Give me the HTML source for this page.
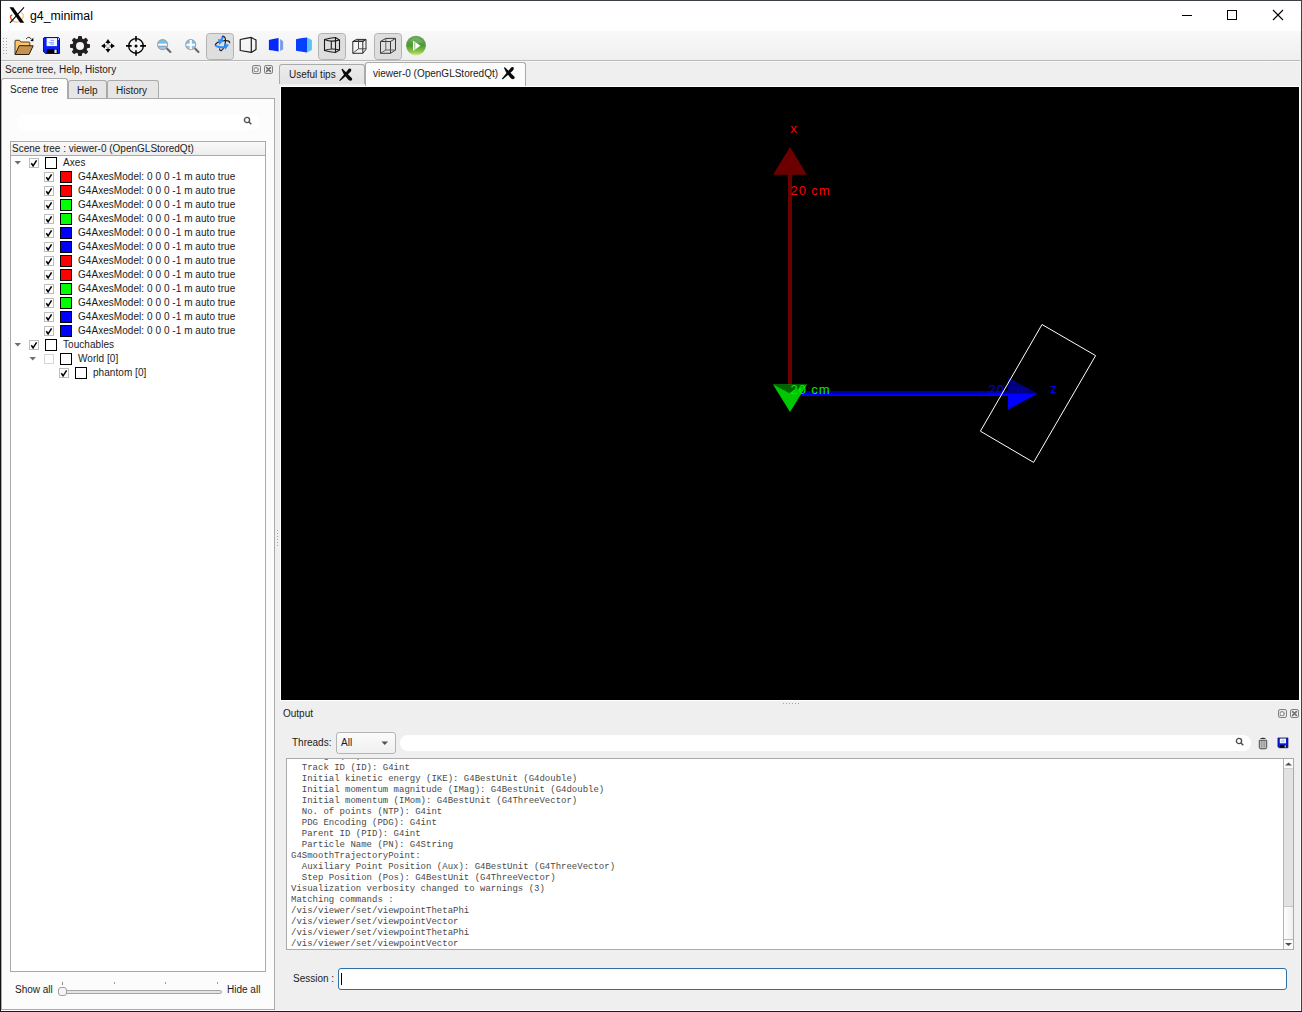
<!DOCTYPE html>
<html><head><meta charset="utf-8">
<style>
*{margin:0;padding:0;box-sizing:border-box}
html,body{width:1302px;height:1012px;overflow:hidden;background:#1c1c1c}
body{position:relative;font-family:"Liberation Sans",sans-serif;font-size:10px;color:#1b1b1b}
.a{position:absolute}
.t{position:absolute;white-space:pre;line-height:1}
#win{left:0;top:0;width:1302px;height:1011px;background:#efefef;border-top:1px solid #3b4046;border-left:1px solid #151515;border-right:1px solid #3c4248}
#title{left:1px;top:1px;width:1300px;height:30px;background:#fff}
#tb{left:1px;top:31px;width:1299px;height:29px;background:linear-gradient(#f9f9f9,#efefef)}
#tbline{left:1px;top:60px;width:1299px;height:1px;background:#bababa}
#tbline2{left:1px;top:61px;width:1299px;height:1px;background:#f6f6f6}
.pane{border:1px solid #aaaaaa;background:#fcfcfc}
.tab{border:1px solid #aaaaaa;border-bottom:none;border-radius:3px 3px 0 0;background:#e6e6e6}
.tabon{border:1px solid #aaaaaa;border-bottom:none;border-radius:3px 3px 0 0;background:#fcfcfc}
.row{position:absolute;height:14px;white-space:pre}
.cb{position:absolute;width:10px;height:10px;border:1px solid #bdbdbd;background:#fff}
.col{position:absolute;width:12px;height:12px;border:1px solid #101010}
.mono{font-family:"Liberation Mono",monospace;font-size:9px;color:#4a4a4a}
</style></head><body>

<div id="win" class="a"></div>
<div id="title" class="a"></div>
<div class="t" style="left:30px;top:10px;font-size:12.3px;color:#000">g4_minimal</div>
<div id="tb" class="a"></div>
<div id="tbline" class="a"></div>
<div id="tbline2" class="a"></div>

<!-- left dock -->
<div class="t" style="left:5px;top:65px">Scene tree, Help, History</div>
<div class="a pane" style="left:1px;top:98px;width:274px;height:912px"></div>
<div class="a tab" style="left:68px;top:80px;width:39px;height:18px"></div>
<div class="a tab" style="left:107px;top:80px;width:52px;height:18px"></div>
<div class="a tabon" style="left:1px;top:78px;width:67px;height:21px"></div>
<div class="t" style="left:10px;top:85px">Scene tree</div>
<div class="t" style="left:77px;top:86px">Help</div>
<div class="t" style="left:116px;top:86px">History</div>

<div class="a" style="left:10px;top:141px;width:256px;height:831px;border:1px solid #aaaaaa;background:#fff"></div>
<div class="a" style="left:11px;top:142px;width:254px;height:14px;background:linear-gradient(#fafafa,#ececec);border-bottom:1px solid #aaaaaa"></div>
<div class="t" style="left:12px;top:144px">Scene tree : viewer-0 (OpenGLStoredQt)</div>

<!-- title bar icons -->
<svg class="a" style="left:8px;top:6px" width="18" height="18" viewBox="0 0 18 18">
<path d="M4.2 9.5 C1.5 8 2 14 5.5 15.3" fill="none" stroke="#e8501a" stroke-width="1.4"/>
<path d="M13.2 6.5 C16.8 8.5 15.5 14 10.5 15.8 C8.5 16.3 6.5 16 5.5 15.3" fill="none" stroke="#f3b050" stroke-width="1.1" opacity="0.85"/>
<path d="M1.5 1.3 L5.3 1.3 L16.2 16.7 L12.2 16.7 Z" fill="#000"/>
<path d="M16 1.3 L2 16.8" stroke="#000" stroke-width="1.1"/>
</svg>
<div class="a" style="left:1182px;top:15px;width:10px;height:1px;background:#000"></div>
<div class="a" style="left:1227px;top:10px;width:10px;height:10px;border:1px solid #000"></div>
<svg class="a" style="left:1272px;top:9px" width="12" height="12" viewBox="0 0 12 12"><path d="M1 1 L11 11 M11 1 L1 11" stroke="#000" stroke-width="1.1"/></svg>

<!-- toolbar -->
<svg class="a" style="left:0;top:31px" width="440" height="29" viewBox="0 31 440 29">
<g fill="#a6a6a6">
<rect x="3" y="38" width="1" height="1"/><rect x="6" y="38" width="1" height="1"/>
<rect x="3" y="41" width="1" height="1"/><rect x="6" y="41" width="1" height="1"/>
<rect x="3" y="44" width="1" height="1"/><rect x="6" y="44" width="1" height="1"/>
<rect x="3" y="47" width="1" height="1"/><rect x="6" y="47" width="1" height="1"/>
<rect x="3" y="50" width="1" height="1"/><rect x="6" y="50" width="1" height="1"/>
<rect x="3" y="53" width="1" height="1"/><rect x="6" y="53" width="1" height="1"/>
</g>
<!-- folder -->
<path d="M15 54.5 L15 41 Q15 40.3 15.8 40.3 L19.5 40.3 L20.8 42 L29 42 Q29.8 42 29.8 42.8 L29.8 45.5 L15 54.5 Z" fill="#fcc668" stroke="#3a2a12" stroke-width="0.9"/>
<path d="M15.2 54.5 L19.2 45.6 L33.2 45.8 L29 54.5 Z" fill="#c49352" stroke="#2e200e" stroke-width="1"/>
<path d="M26 39 Q28.8 35.4 31.6 39.4" fill="none" stroke="#222" stroke-width="0.9"/>
<path d="M30.3 40.9 L33.3 37.8 L33.4 41.3 Z" fill="#000"/>
<!-- floppy -->
<path d="M44.2 37.5 L58.5 37.5 L59.5 38.5 L59.5 53.5 L45.5 53.5 L43.5 51.8 L43.5 38.2 Z" fill="#0a22f4" stroke="#0c0c38" stroke-width="0.9"/>
<rect x="46.6" y="38.1" width="10.4" height="8" fill="#f6f8ff"/>
<path d="M50.5 40.4 H54 M48.8 42.6 H54 M50.2 44.2 H54" stroke="#6f8cf8" stroke-width="0.8"/>
<rect x="46.9" y="49" width="10.9" height="4.3" fill="#000"/>
<rect x="54.4" y="49.6" width="2.3" height="3.4" fill="#e8e8e8"/>
<rect x="58" y="38.2" width="0.8" height="1.8" fill="#fff"/>
<!-- gear -->
<g transform="translate(80 46)" fill="#241f20">
<circle r="7.7"/>
<rect x="-2" y="-10" width="4" height="20" rx="1"/>
<rect x="-2" y="-10" width="4" height="20" rx="1" transform="rotate(45)"/>
<rect x="-2" y="-10" width="4" height="20" rx="1" transform="rotate(90)"/>
<rect x="-2" y="-10" width="4" height="20" rx="1" transform="rotate(135)"/>
<circle r="4" fill="#f4f4f4"/>
</g>
<!-- move -->
<g fill="#000">
<path d="M108 39 L110.6 42.9 L105.4 42.9 Z"/><path d="M108 52.8 L110.6 48.9 L105.4 48.9 Z"/>
<path d="M101.1 45.9 L105 43.3 L105 48.5 Z"/><path d="M114.9 45.9 L111 43.3 L111 48.5 Z"/>
<rect x="107.3" y="43" width="1.4" height="1.2" opacity="0.75"/><rect x="107.3" y="47.6" width="1.4" height="1.2" opacity="0.75"/>
<rect x="105" y="45.2" width="1.2" height="1.4" opacity="0.75"/><rect x="109.8" y="45.2" width="1.2" height="1.4" opacity="0.75"/>
<rect x="106.3" y="44.3" width="1" height="1" opacity="0.35"/><rect x="108.7" y="44.3" width="1" height="1" opacity="0.35"/>
<rect x="106.3" y="46.7" width="1" height="1" opacity="0.35"/><rect x="108.7" y="46.7" width="1" height="1" opacity="0.35"/>
</g>
<!-- crosshair -->
<g stroke="#000">
<circle cx="136" cy="45.9" r="7.3" fill="none" stroke-width="1.35"/>
<path d="M136 36 V41.6 M136 50.2 V55.8 M126 45.9 H131.7 M140.2 45.9 H146" stroke-width="1.6"/>
</g>
<circle cx="136" cy="45.9" r="1.5" fill="#000"/>
<!-- zoom out -->
<defs><linearGradient id="lens" x1="0" y1="0" x2="0" y2="1"><stop offset="0" stop-color="#62c8f6"/><stop offset="0.55" stop-color="#62c8f6"/><stop offset="0.7" stop-color="#9ab8ee"/><stop offset="1" stop-color="#b8c8f0"/></linearGradient></defs>
<g>
<path d="M166.9 48.4 L170.4 52" stroke="#686868" stroke-width="2.1" stroke-linecap="round"/>
<circle cx="162.6" cy="44.6" r="5" fill="url(#lens)" stroke="#a4a4a4" stroke-width="1.2"/>
<rect x="158.3" y="43.7" width="8.6" height="2.1" fill="#fff"/>
<rect x="158.6" y="45.8" width="8" height="0.6" fill="#707070" opacity="0.6"/>
</g>
<!-- zoom in -->
<g>
<path d="M195 48.4 L198.5 52" stroke="#686868" stroke-width="2.1" stroke-linecap="round"/>
<circle cx="190.7" cy="44.6" r="5" fill="url(#lens)" stroke="#a4a4a4" stroke-width="1.2"/>
<rect x="186.4" y="43.7" width="8.6" height="2.1" fill="#fff"/>
<rect x="189.7" y="40" width="2.1" height="9.2" fill="#fff"/>
</g>
<!-- pressed buttons -->
<rect x="206.5" y="33.5" width="27" height="26" rx="3" fill="#dedede" stroke="#b2b2b2"/>
<rect x="318.5" y="33.5" width="27" height="26" rx="3" fill="#dedede" stroke="#b2b2b2"/>
<rect x="374.5" y="33.5" width="27" height="26" rx="3" fill="#dedede" stroke="#b2b2b2"/>
<!-- rotate -->
<g fill="none" stroke-linecap="round">
<path d="M215.3 45 Q216.5 41.6 224 40.6 Q229.6 40.3 229.6 42.6" stroke="#1c1c1c" stroke-width="1.3"/>
<path d="M223 36.4 Q225.9 36.2 225.4 42 Q224.9 48 221.4 50.6 Q219.6 51 219.7 48.9" stroke="#222" stroke-width="1.2"/>
<path d="M223 36.6 L221 40.6" stroke="#2a90ff" stroke-width="2.2"/>
<path d="M216.2 46.1 Q219.5 47.7 224.8 47.2" stroke="#2a8cff" stroke-width="1.9"/>
</g>
<path d="M217.9 39.1 L223.9 40.3 L219.3 45.1 Z" fill="#2a90ff"/>
<path d="M224 44.1 L229 44.5 L225.4 49.8 Z" fill="#2a90ff"/>
<circle cx="222.9" cy="36.5" r="0.8" fill="#00107a"/>
<!-- perspective outline box -->
<path d="M240.2 39.5 Q246 38.2 251.3 37.4 L256 40.1 L256 49.6 L251.3 52.4 Q246 51.5 240.2 50.5 Z M251.3 37.4 V52.4" fill="none" stroke="#1e1e1e" stroke-width="1.2" stroke-linejoin="round"/>
<!-- half blue -->
<path d="M268.9 40 L273 39 L278.6 38.1 L278.6 51.6 L273 50.6 L268.9 49.9 Z" fill="#0328fe"/>
<path d="M280.1 39 L283.1 41.3 L283.1 49.5 L280.1 51 Z" fill="#7d9be0"/>
<!-- solid blue -->
<path d="M296 39.2 L300.5 38.2 L307 37.5 L307 52.6 L300.5 51.6 L296 50.8 Z" fill="#0540ff"/>
<path d="M307 37.5 L311.9 40 L311.9 49.9 L307 52.6 Z" fill="#5cc4ee"/>
<!-- wireframe persp -->
<g fill="none" stroke="#1a1a1a" stroke-width="1.1">
<path d="M324.5 39.6 Q330 37.8 335.5 37.5 L339.5 40 L339.5 50 L335.5 52.5 Q330 52.2 324.5 50.5 Z"/>
<path d="M335.5 37.5 V52.5"/>
<path d="M324.5 39.6 Q331 42.5 339.5 40 M324.5 50.5 Q331 47.8 339.5 50 M331.3 41.6 V48.4"/>
</g>
<!-- ortho cube small -->
<g fill="none" stroke="#2c2c2c" stroke-width="1">
<path d="M352.8 41.5 L356.5 39.4 L366 39.4 L362.8 41.5 Z" fill="#9a9a9a"/>
<path d="M352.8 41.5 H362.8 V53.3 H352.8 Z M362.8 41.5 L366 39.4 V49.3 L362.8 53.3"/>
<path d="M358.5 39.6 V48.8 H366 M352.8 53.3 L358.5 48.8" stroke="#3a3a3a" stroke-width="0.9"/>
</g>
<!-- ortho cube in pressed -->
<g fill="none" stroke="#3a3a3a" stroke-width="1">
<path d="M380.5 41.5 L385.8 38.4 H395.5 L390.5 41.5 Z M380.5 41.5 V53.3 H390.5 V41.5 M395.5 38.4 V50 L390.5 53.3"/>
<path d="M385.8 38.4 V50 H395.5 M380.5 53.3 L385.8 50" stroke="#555" stroke-width="0.9"/>
</g>
<!-- green play -->
<defs><linearGradient id="gp" x1="0" y1="0" x2="0" y2="1"><stop offset="0" stop-color="#6aa85e"/><stop offset="0.5" stop-color="#4c9a34"/><stop offset="0.8" stop-color="#8cc448"/><stop offset="1" stop-color="#d6ec90"/></linearGradient></defs>
<circle cx="416" cy="45.6" r="9.9" fill="url(#gp)"/>
<path d="M409 41 Q416 34 423.5 42 Q418 45 409 41Z" fill="#ffffff" opacity="0.12"/>
<rect x="413" y="41.2" width="1.5" height="9.3" fill="#fff"/>
<path d="M415.2 42 L420.4 45.7 L415.2 49.5 Z" fill="#fff"/>
</svg>
<svg class="a" style="left:14px;top:160px" width="8" height="6" viewBox="0 0 8 6"><path d="M0.5 1 L7 1 L3.75 4.5 Z" fill="#6e6e6e"/></svg><div class="a" style="left:29px;top:158px;width:10px;height:10px;border:1px solid #bdbdbd;background:#fff"></div><svg class="a" style="left:29px;top:158px" width="10" height="10" viewBox="0 0 10 10"><path d="M2.3 5.2 L4.1 7.8 L7.6 2.3" fill="none" stroke="#000" stroke-width="1.5"/></svg><div class="a" style="left:45px;top:157px;width:12px;height:12px;border:1px solid #000;background:#fff"></div><div class="t" style="left:63px;top:158px;letter-spacing:0.05px">Axes</div>
<div class="a" style="left:44px;top:172px;width:10px;height:10px;border:1px solid #bdbdbd;background:#fff"></div><svg class="a" style="left:44px;top:172px" width="10" height="10" viewBox="0 0 10 10"><path d="M2.3 5.2 L4.1 7.8 L7.6 2.3" fill="none" stroke="#000" stroke-width="1.5"/></svg><div class="a" style="left:60px;top:171px;width:12px;height:12px;border:1px solid #000;background:#ff0000"></div><div class="t" style="left:78px;top:172px;letter-spacing:0.05px">G4AxesModel: 0 0 0 -1 m auto true</div>
<div class="a" style="left:44px;top:186px;width:10px;height:10px;border:1px solid #bdbdbd;background:#fff"></div><svg class="a" style="left:44px;top:186px" width="10" height="10" viewBox="0 0 10 10"><path d="M2.3 5.2 L4.1 7.8 L7.6 2.3" fill="none" stroke="#000" stroke-width="1.5"/></svg><div class="a" style="left:60px;top:185px;width:12px;height:12px;border:1px solid #000;background:#ff0000"></div><div class="t" style="left:78px;top:186px;letter-spacing:0.05px">G4AxesModel: 0 0 0 -1 m auto true</div>
<div class="a" style="left:44px;top:200px;width:10px;height:10px;border:1px solid #bdbdbd;background:#fff"></div><svg class="a" style="left:44px;top:200px" width="10" height="10" viewBox="0 0 10 10"><path d="M2.3 5.2 L4.1 7.8 L7.6 2.3" fill="none" stroke="#000" stroke-width="1.5"/></svg><div class="a" style="left:60px;top:199px;width:12px;height:12px;border:1px solid #000;background:#00ff00"></div><div class="t" style="left:78px;top:200px;letter-spacing:0.05px">G4AxesModel: 0 0 0 -1 m auto true</div>
<div class="a" style="left:44px;top:214px;width:10px;height:10px;border:1px solid #bdbdbd;background:#fff"></div><svg class="a" style="left:44px;top:214px" width="10" height="10" viewBox="0 0 10 10"><path d="M2.3 5.2 L4.1 7.8 L7.6 2.3" fill="none" stroke="#000" stroke-width="1.5"/></svg><div class="a" style="left:60px;top:213px;width:12px;height:12px;border:1px solid #000;background:#00ff00"></div><div class="t" style="left:78px;top:214px;letter-spacing:0.05px">G4AxesModel: 0 0 0 -1 m auto true</div>
<div class="a" style="left:44px;top:228px;width:10px;height:10px;border:1px solid #bdbdbd;background:#fff"></div><svg class="a" style="left:44px;top:228px" width="10" height="10" viewBox="0 0 10 10"><path d="M2.3 5.2 L4.1 7.8 L7.6 2.3" fill="none" stroke="#000" stroke-width="1.5"/></svg><div class="a" style="left:60px;top:227px;width:12px;height:12px;border:1px solid #000;background:#0000ff"></div><div class="t" style="left:78px;top:228px;letter-spacing:0.05px">G4AxesModel: 0 0 0 -1 m auto true</div>
<div class="a" style="left:44px;top:242px;width:10px;height:10px;border:1px solid #bdbdbd;background:#fff"></div><svg class="a" style="left:44px;top:242px" width="10" height="10" viewBox="0 0 10 10"><path d="M2.3 5.2 L4.1 7.8 L7.6 2.3" fill="none" stroke="#000" stroke-width="1.5"/></svg><div class="a" style="left:60px;top:241px;width:12px;height:12px;border:1px solid #000;background:#0000ff"></div><div class="t" style="left:78px;top:242px;letter-spacing:0.05px">G4AxesModel: 0 0 0 -1 m auto true</div>
<div class="a" style="left:44px;top:256px;width:10px;height:10px;border:1px solid #bdbdbd;background:#fff"></div><svg class="a" style="left:44px;top:256px" width="10" height="10" viewBox="0 0 10 10"><path d="M2.3 5.2 L4.1 7.8 L7.6 2.3" fill="none" stroke="#000" stroke-width="1.5"/></svg><div class="a" style="left:60px;top:255px;width:12px;height:12px;border:1px solid #000;background:#ff0000"></div><div class="t" style="left:78px;top:256px;letter-spacing:0.05px">G4AxesModel: 0 0 0 -1 m auto true</div>
<div class="a" style="left:44px;top:270px;width:10px;height:10px;border:1px solid #bdbdbd;background:#fff"></div><svg class="a" style="left:44px;top:270px" width="10" height="10" viewBox="0 0 10 10"><path d="M2.3 5.2 L4.1 7.8 L7.6 2.3" fill="none" stroke="#000" stroke-width="1.5"/></svg><div class="a" style="left:60px;top:269px;width:12px;height:12px;border:1px solid #000;background:#ff0000"></div><div class="t" style="left:78px;top:270px;letter-spacing:0.05px">G4AxesModel: 0 0 0 -1 m auto true</div>
<div class="a" style="left:44px;top:284px;width:10px;height:10px;border:1px solid #bdbdbd;background:#fff"></div><svg class="a" style="left:44px;top:284px" width="10" height="10" viewBox="0 0 10 10"><path d="M2.3 5.2 L4.1 7.8 L7.6 2.3" fill="none" stroke="#000" stroke-width="1.5"/></svg><div class="a" style="left:60px;top:283px;width:12px;height:12px;border:1px solid #000;background:#00ff00"></div><div class="t" style="left:78px;top:284px;letter-spacing:0.05px">G4AxesModel: 0 0 0 -1 m auto true</div>
<div class="a" style="left:44px;top:298px;width:10px;height:10px;border:1px solid #bdbdbd;background:#fff"></div><svg class="a" style="left:44px;top:298px" width="10" height="10" viewBox="0 0 10 10"><path d="M2.3 5.2 L4.1 7.8 L7.6 2.3" fill="none" stroke="#000" stroke-width="1.5"/></svg><div class="a" style="left:60px;top:297px;width:12px;height:12px;border:1px solid #000;background:#00ff00"></div><div class="t" style="left:78px;top:298px;letter-spacing:0.05px">G4AxesModel: 0 0 0 -1 m auto true</div>
<div class="a" style="left:44px;top:312px;width:10px;height:10px;border:1px solid #bdbdbd;background:#fff"></div><svg class="a" style="left:44px;top:312px" width="10" height="10" viewBox="0 0 10 10"><path d="M2.3 5.2 L4.1 7.8 L7.6 2.3" fill="none" stroke="#000" stroke-width="1.5"/></svg><div class="a" style="left:60px;top:311px;width:12px;height:12px;border:1px solid #000;background:#0000ff"></div><div class="t" style="left:78px;top:312px;letter-spacing:0.05px">G4AxesModel: 0 0 0 -1 m auto true</div>
<div class="a" style="left:44px;top:326px;width:10px;height:10px;border:1px solid #bdbdbd;background:#fff"></div><svg class="a" style="left:44px;top:326px" width="10" height="10" viewBox="0 0 10 10"><path d="M2.3 5.2 L4.1 7.8 L7.6 2.3" fill="none" stroke="#000" stroke-width="1.5"/></svg><div class="a" style="left:60px;top:325px;width:12px;height:12px;border:1px solid #000;background:#0000ff"></div><div class="t" style="left:78px;top:326px;letter-spacing:0.05px">G4AxesModel: 0 0 0 -1 m auto true</div>
<svg class="a" style="left:14px;top:342px" width="8" height="6" viewBox="0 0 8 6"><path d="M0.5 1 L7 1 L3.75 4.5 Z" fill="#6e6e6e"/></svg><div class="a" style="left:29px;top:340px;width:10px;height:10px;border:1px solid #bdbdbd;background:#fff"></div><svg class="a" style="left:29px;top:340px" width="10" height="10" viewBox="0 0 10 10"><path d="M2.3 5.2 L4.1 7.8 L7.6 2.3" fill="none" stroke="#000" stroke-width="1.5"/></svg><div class="a" style="left:45px;top:339px;width:12px;height:12px;border:1px solid #000;background:#fff"></div><div class="t" style="left:63px;top:340px;letter-spacing:0.05px">Touchables</div>
<svg class="a" style="left:29px;top:356px" width="8" height="6" viewBox="0 0 8 6"><path d="M0.5 1 L7 1 L3.75 4.5 Z" fill="#6e6e6e"/></svg><div class="a" style="left:44px;top:354px;width:10px;height:10px;border:1px solid #d6d6d6;background:#fff"></div><div class="a" style="left:60px;top:353px;width:12px;height:12px;border:1px solid #000;background:#fff"></div><div class="t" style="left:78px;top:354px;letter-spacing:0.05px">World [0]</div>
<div class="a" style="left:59px;top:368px;width:10px;height:10px;border:1px solid #bdbdbd;background:#fff"></div><svg class="a" style="left:59px;top:368px" width="10" height="10" viewBox="0 0 10 10"><path d="M2.3 5.2 L4.1 7.8 L7.6 2.3" fill="none" stroke="#000" stroke-width="1.5"/></svg><div class="a" style="left:75px;top:367px;width:12px;height:12px;border:1px solid #000;background:#fff"></div><div class="t" style="left:93px;top:368px;letter-spacing:0.05px">phantom [0]</div><!-- left dock bottom -->
<div class="a" style="left:17px;top:114px;width:242px;height:16px;background:#fff;border-radius:8px"></div>
<svg class="a" style="left:243px;top:116px" width="10" height="10" viewBox="0 0 10 10"><circle cx="4" cy="4" r="2.6" fill="none" stroke="#505050" stroke-width="1.4"/><path d="M6 6 L8.3 8.3" stroke="#505050" stroke-width="1.6"/></svg>
<div class="t" style="left:15px;top:985px">Show all</div>
<div class="t" style="left:227px;top:985px">Hide all</div>
<div class="a" style="left:62px;top:982px;width:1px;height:3px;background:#8a8a8a"></div>
<div class="a" style="left:114px;top:982px;width:1px;height:2px;background:#9a9a9a"></div>
<div class="a" style="left:165px;top:982px;width:1px;height:2px;background:#9a9a9a"></div>
<div class="a" style="left:217px;top:982px;width:1px;height:2px;background:#9a9a9a"></div>
<div class="a" style="left:62px;top:990px;width:160px;height:4px;border:1px solid #a4a4a4;border-radius:2px;background:#e4e4e4"></div>
<div class="a" style="left:58px;top:987px;width:9px;height:9px;border:1px solid #a0a0a0;border-radius:3px;background:#f4f4f4"></div>

<!-- splitter dots -->
<div class="a" style="left:277px;top:530px;width:1px;height:16px;background:repeating-linear-gradient(#a4a4a4 0 1px,transparent 1px 3px)"></div>
<div class="a" style="left:783px;top:703px;width:16px;height:1px;background:repeating-linear-gradient(90deg,#a4a4a4 0 1px,transparent 1px 3px)"></div>

<!-- dock buttons -->
<svg class="a" style="left:252px;top:65px" width="22" height="10" viewBox="0 0 22 10">
<rect x="0.5" y="0.5" width="8" height="8" rx="1.6" fill="#ececec" stroke="#7e7e7e"/>
<rect x="2.2" y="3" width="3.6" height="3.6" fill="#fafafa" stroke="#8c8c8c" stroke-width="0.9"/><path d="M3 2.8 L4 1.7 L5 2.8 Z M6 3.8 L7.1 4.8 L6 5.8 Z" fill="#777"/>
<rect x="12.5" y="0.5" width="8" height="8" rx="1.6" fill="#ececec" stroke="#7e7e7e"/>
<path d="M14.6 2.6 L18.4 6.4 M18.4 2.6 L14.6 6.4" stroke="#6e6e6e" stroke-width="1.5" stroke-linecap="round"/>
</svg>
<svg class="a" style="left:1278px;top:709px" width="22" height="10" viewBox="0 0 22 10">
<rect x="0.5" y="0.5" width="8" height="8" rx="1.6" fill="#ececec" stroke="#7e7e7e"/>
<rect x="2.2" y="3" width="3.6" height="3.6" fill="#fafafa" stroke="#8c8c8c" stroke-width="0.9"/><path d="M3 2.8 L4 1.7 L5 2.8 Z M6 3.8 L7.1 4.8 L6 5.8 Z" fill="#777"/>
<rect x="12.5" y="0.5" width="8" height="8" rx="1.6" fill="#ececec" stroke="#7e7e7e"/>
<path d="M14.6 2.6 L18.4 6.4 M18.4 2.6 L14.6 6.4" stroke="#6e6e6e" stroke-width="1.5" stroke-linecap="round"/>
</svg>
<!-- main tabs -->
<div class="a tab" style="left:279px;top:64px;width:86px;height:20px;background:linear-gradient(#ececec,#e2e2e2)"></div>
<div class="t" style="left:289px;top:70px">Useful tips</div>
<div class="a tabon" style="left:365px;top:62px;width:161px;height:25px"></div>
<div class="t" style="left:373px;top:69px">viewer-0 (OpenGLStoredQt)</div>
<svg class="a" style="left:336px;top:66px" width="20" height="18" viewBox="336 66 20 18"><path d="M341.4 69.2 Q342.2 68.5 343 69.2 L352 78.3 Q352.8 80.6 350.4 80.7 Q348.8 80.4 347.6 78.9 L343.5 73.8 Z" fill="#0a0a0a"/><path d="M349.6 68.5 Q351.6 68.4 351.3 70.4 Q350.8 71.8 349.4 73 L340.4 80.7 Q339.2 81 339.3 80.2 L347.6 70.2 Q348.6 68.8 349.6 68.5 Z" fill="#0a0a0a"/></svg>
<svg class="a" style="left:498px;top:65px" width="20" height="18" viewBox="335.5 66.5 20 18"><path d="M341.4 69.2 Q342.2 68.5 343 69.2 L352 78.3 Q352.8 80.6 350.4 80.7 Q348.8 80.4 347.6 78.9 L343.5 73.8 Z" fill="#0a0a0a"/><path d="M349.6 68.5 Q351.6 68.4 351.3 70.4 Q350.8 71.8 349.4 73 L340.4 80.7 Q339.2 81 339.3 80.2 L347.6 70.2 Q348.6 68.8 349.6 68.5 Z" fill="#0a0a0a"/></svg>

<!-- viewer -->
<div class="a" style="left:280px;top:86px;width:1020px;height:615px;background:#fff"></div>
<div class="a" style="left:281px;top:87px;width:1018px;height:613px;background:#000"></div>
<svg class="a" style="left:281px;top:87px" width="1018" height="613" viewBox="281 87 1018 613" font-family="Liberation Sans">
<rect x="788" y="174" width="4" height="212" fill="#6c0000"/>
<polygon points="773,174.8 807,174.8 790,147" fill="#6c0000"/>
<text x="790.2" y="133" font-size="13.5" fill="#ff0000">x</text>
<text x="790.5" y="195" font-size="13" fill="#ff0000" textLength="39" lengthAdjust="spacing">20 cm</text>
<rect x="792" y="391" width="217" height="2.5" fill="#0000a0"/>
<rect x="792" y="393.5" width="217" height="2.5" fill="#0000ff"/>
<polygon points="1008,377.3 1037.7,393.5 1008,393.5" fill="#000078"/>
<text x="988.5" y="393.8" font-size="13" fill="#0000f0" textLength="39" lengthAdjust="spacing">20 <tspan fill="#0000a8">cm</tspan></text>
<polygon points="1008,393.5 1037.7,393.5 1008,409.7" fill="#0000ff"/>
<text x="1050.2" y="393" font-size="13" fill="#0000ff">z</text>
<polygon points="773,384.4 807,384.4 790,412.1" fill="#00c800"/>
<polygon points="773,384.4 807,384.4 789,393" fill="#006400"/>
<text x="790.5" y="394" font-size="13" fill="#00ee00" textLength="39" lengthAdjust="spacing">20 cm</text>
<polygon points="1042,324.5 1095.6,355.6 1033.6,462.4 980.4,431.2" fill="none" stroke="#fff" stroke-width="1"/>
</svg>

<!-- output dock -->
<div class="t" style="left:283px;top:709px">Output</div>
<div class="t" style="left:292px;top:738px">Threads:</div>
<div class="a" style="left:336px;top:732px;width:60px;height:22px;border:1px solid #b4b4b4;border-radius:3px;background:linear-gradient(#fbfbfb,#f0f0f0)"></div>
<div class="t" style="left:341px;top:738px">All</div>
<svg class="a" style="left:381px;top:741px" width="8" height="5" viewBox="0 0 8 5"><path d="M0.5 0.5 L7 0.5 L3.75 4 Z" fill="#505050"/></svg>
<div class="a" style="left:400px;top:735px;width:851px;height:16px;background:#fff;border-radius:8px"></div>
<svg class="a" style="left:1235px;top:737px" width="10" height="10" viewBox="0 0 10 10"><circle cx="4" cy="4" r="2.6" fill="none" stroke="#505050" stroke-width="1.4"/><path d="M6 6 L8.3 8.3" stroke="#505050" stroke-width="1.6"/></svg>
<svg class="a" style="left:1254px;top:733px" width="40" height="20" viewBox="1254 733 40 20">
<path d="M1259.8 738.9 Q1263 736.4 1266.2 738.9 Z" fill="#2a2a2a"/>
<path d="M1259.3 740.3 H1266.7 V747.6 Q1266.7 748.8 1265 748.8 H1261 Q1259.3 748.8 1259.3 747.6 Z" fill="#c4c4c4" stroke="#3c3c3c" stroke-width="0.9"/>
<path d="M1261.4 741.2 V747.6 M1263 741.2 V747.6 M1264.6 741.2 V747.6" stroke="#8a8a8a" stroke-width="0.7"/>
<path d="M1277.9 737.9 H1288 V747.8 H1279 L1277.9 746.8 Z" fill="#0a1cd8" stroke="#00007a" stroke-width="0.6"/>
<rect x="1280.3" y="737.9" width="5.8" height="0.9" fill="#707070"/>
<rect x="1279.8" y="738.8" width="6.2" height="4.5" fill="#f6f8ff"/>
<path d="M1281.5 740.3 H1284.5 M1281.2 741.8 H1284.5" stroke="#8ea4ff" stroke-width="0.7"/>
<rect x="1280" y="745" width="6.6" height="2.7" fill="#000"/>
<rect x="1284.6" y="745.4" width="1.3" height="2" fill="#e0e0d0"/>
</svg>

<div class="a" style="left:286px;top:758px;width:1008px;height:192px;border:1px solid #ababab;background:#fff;overflow:hidden"></div>
<div class="a mono" style="left:291px;top:759px;width:990px;height:190px;overflow:hidden;line-height:11px;white-space:pre">
<div style="position:absolute;left:0;top:-8px">  Charge (Ch): G4double</div><div style="position:absolute;left:0;top:4px">  Track ID (ID): G4int
  Initial kinetic energy (IKE): G4BestUnit (G4double)
  Initial momentum magnitude (IMag): G4BestUnit (G4double)
  Initial momentum (IMom): G4BestUnit (G4ThreeVector)
  No. of points (NTP): G4int
  PDG Encoding (PDG): G4int
  Parent ID (PID): G4int
  Particle Name (PN): G4String
G4SmoothTrajectoryPoint:
  Auxiliary Point Position (Aux): G4BestUnit (G4ThreeVector)
  Step Position (Pos): G4BestUnit (G4ThreeVector)
Visualization verbosity changed to warnings (3)
Matching commands :
/vis/viewer/set/viewpointThetaPhi
/vis/viewer/set/viewpointVector
/vis/viewer/set/viewpointThetaPhi
/vis/viewer/set/viewpointVector</div></div>
<!-- scrollbar -->
<div class="a" style="left:1283px;top:759px;width:10px;height:190px;border-left:1px solid #b4b4b4;background:#fafafa"></div>
<div class="a" style="left:1284px;top:769px;width:9px;height:138px;background:#e2e2e2"></div>
<div class="a" style="left:1284px;top:907px;width:9px;height:32px;background:linear-gradient(90deg,#fdfdfd,#f0f0f0)"></div>
<div class="a" style="left:1284px;top:906px;width:9px;height:1px;background:#c4c4c4"></div>
<div class="a" style="left:1284px;top:939px;width:9px;height:1px;background:#b8b8b8"></div>
<div class="a" style="left:1284px;top:768px;width:9px;height:1px;background:#d0d0d0"></div>
<svg class="a" style="left:1284px;top:760px" width="9" height="8" viewBox="0 0 9 8"><path d="M1 5.5 L8 5.5 L4.5 2.5 Z" fill="#505050"/></svg>
<svg class="a" style="left:1284px;top:941px" width="9" height="8" viewBox="0 0 9 8"><path d="M1 2 L8 2 L4.5 5 Z" fill="#505050"/></svg>

<div class="t" style="left:293px;top:974px">Session :</div>
<div class="a" style="left:338px;top:968px;width:949px;height:22px;border:1.5px solid #2e6fa5;border-radius:3px;background:#fff"></div>
<div class="a" style="left:341px;top:973px;width:1px;height:12px;background:#000"></div>

<div class="a" style="left:1px;top:1010px;width:1300px;height:1px;background:#fafafa"></div>
<div class="a" style="left:1300px;top:61px;width:1px;height:950px;background:#f8f8f8"></div>
</body></html>
